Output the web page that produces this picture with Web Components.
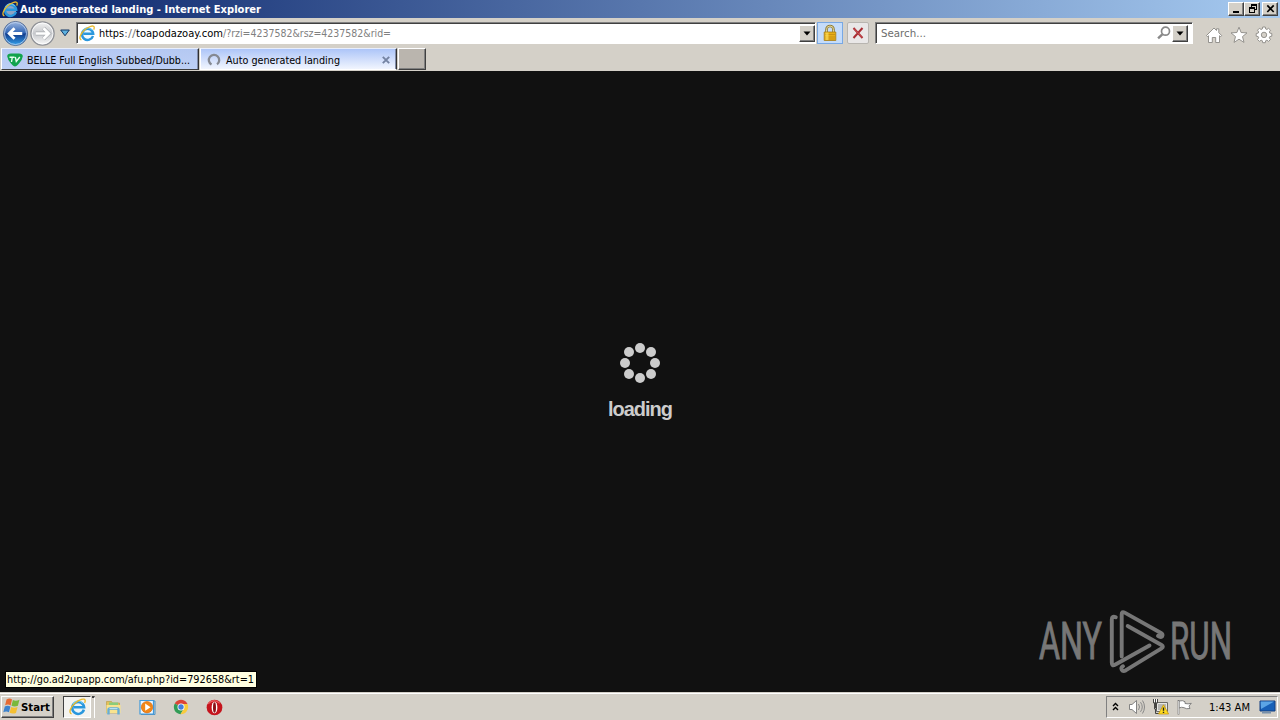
<!DOCTYPE html>
<html lang="en">
<head>
<meta charset="utf-8">
<title>Auto generated landing</title>
<style>
    html, body { margin: 0; height: 100%; overflow: hidden; }
    body {
        --face: #d4d0c8;
        --ink: #000;
        font: 11px/14px "DejaVu Sans Condensed", "DejaVu Sans", sans-serif;
        color: var(--ink);
        background: #111;
    }
</style>
</head>
<body>
<desktop-screen></desktop-screen>

<script>
// All glyphs in one place, drawn in their own small viewBoxes
const ICONS = {
    ie: `<svg viewBox="0 0 16 16"><circle cx="8.500" cy="8.300" r="6" fill="#e4f6ff" opacity=".6"/><path d="M14 11A5.600 5.600 0 1 1 14.200 8.700H4.500" fill="none" stroke="#2a97dd" stroke-width="2.400"/><path d="M13 5.200A5.400 5.400 0 0 0 3.700 6" fill="none" stroke="#79d0f5" stroke-width="1"/><path d="M2.400 14.900C-.6 14 1.200 9 5.500 5 9.500 1.200 14.800-.2 15.200 2.200c.1.900-.1 1.600-.5 2.400" fill="none" stroke="#e9b92c" stroke-width="1.300"/></svg>`,
    back: `<svg viewBox="0 0 28 28"><defs><linearGradient id="b" x2="0" y2="1"><stop stop-color="#9fb8e0"/><stop offset=".48" stop-color="#3165b4"/><stop offset=".52" stop-color="#123c8c"/><stop offset="1" stop-color="#35a4ee"/></linearGradient></defs><circle cx="14" cy="14" r="12.500" fill="url(#b)" stroke="#5c7197"/><circle cx="14" cy="14" r="11.400" fill="none" stroke="#c5d8f3" stroke-width=".8"/><path d="M21 14H8M13 8.500 7.500 14l5.500 5.500" fill="none" stroke="#fff" stroke-width="3"/></svg>`,
    forward: `<svg viewBox="0 0 28 28"><defs><linearGradient id="f" x2="0" y2="1"><stop stop-color="#f3f3f3"/><stop offset=".5" stop-color="#c6c8cc"/><stop offset="1" stop-color="#fafafa"/></linearGradient></defs><circle cx="14" cy="14" r="12" fill="url(#f)" stroke="#8f9197" stroke-width="1.400"/><circle cx="14" cy="14" r="10.800" fill="none" stroke="#fff" stroke-width=".8"/><path d="M7 14h13M15 8.500l5.500 5.500L15 19.500" fill="none" stroke="#a6a9ae" stroke-width="4"/><path d="M7 14h13M15 8.500l5.500 5.500L15 19.500" fill="none" stroke="#fff" stroke-width="2.800"/></svg>`,
    history: `<svg viewBox="0 0 10 8"><path d="M.7 1h8.600L5 6.800z" fill="#5db1df" stroke="#123765"/></svg>`,
    down: `<svg viewBox="0 0 8 5"><path d="M.5.500h7L4 4.500z"/></svg>`,
    lock: `<svg viewBox="0 0 16 16"><path d="M4.500 8V4.500a3.500 3.500 0 0 1 7 0V8" fill="none" stroke="#8e7b36" stroke-width="2.600"/><path d="M4.500 8V4.500a3.500 3.500 0 0 1 7 0V8" fill="none" stroke="#e2d79b" stroke-width="1"/><path d="M2.200 7h11.600v8.500H2.200z" fill="#e7ae16" stroke="#a67c15" stroke-width=".8"/><path d="M3 9.500h10M3 12h10M3 14h10" stroke="#bd8511" stroke-width=".7"/><path d="M3.500 7.500h3v7.500h-3z" fill="#ffe05a" opacity=".7"/></svg>`,
    stop: `<svg viewBox="0 0 12 12"><path d="m1.500 1 9 10M10.500 1l-9 10" stroke="#a92d33" stroke-width="2"/><path d="m2 1.500 8 9" stroke="#d85f61" stroke-width=".7"/></svg>`,
    search: `<svg viewBox="0 0 14 14"><circle cx="8.500" cy="5.200" r="4" fill="#fff" stroke="#898989" stroke-width="1.700"/><path d="m5.300 8.400-4.200 4" stroke="#898989" stroke-width="2.400"/></svg>`,
    home: `<svg viewBox="0 0 18 18"><path d="M1.500 9.500 9 2l2.500 2.500V2.800h2.300v4l2.900 2.700-1 1.200-1.200-1v6.800H10.700v-5H7.300v5H3.500V9.700l-1 1z" fill="#fff" stroke="#8b8985" stroke-width=".9"/></svg>`,
    star: `<svg viewBox="0 0 18 18"><path d="m9 1.200 2.100 5.300 5.900.4-4.500 3.700 1.500 5.800L9 13.200l-5 3.200 1.500-5.800L1 6.900l5.900-.4z" fill="#fff" stroke="#8b8985" stroke-width=".9"/></svg>`,
    gear: `<svg viewBox="0 0 18 18"><path d="m7.700 1h2.600l.4 2 1.200.5 1.700-1.200 1.900 1.900-1.200 1.700.5 1.200 2 .4v2.700l-2 .4-.5 1.200 1.200 1.700-1.900 1.900-1.700-1.200-1.200.5-.4 2H7.700l-.4-2-1.200-.5-1.700 1.200-1.900-1.900 1.200-1.700-.5-1.200-2-.4V7.500l2-.4.5-1.200-1.200-1.700 1.900-1.900 1.700 1.200L7.300 3z" fill="#fff" stroke="#8b8985" stroke-width=".9"/><circle cx="9" cy="8.900" r="2.700" fill="#d4d0c8" stroke="#8b8985" stroke-width=".9"/></svg>`,
    tv: `<svg viewBox="0 0 16 14"><path d="M.2 3.300Q.4.500 4 .5h8q3.600 0 3.800 2.800-.3 3.200-3.600 6.900-2.800 3.300-4.200 3.300t-4.200-3.300Q.5 6.500.2 3.300z" fill="#11a34d"/><path d="M2.500 4.200h5M5.300 4 4.500 9M8.300 4l1 4.500L12.800 4" fill="none" stroke="#e5fff0" stroke-width="1.400"/></svg>`,
    ring: `<svg viewBox="0 0 14 14"><path d="M4.500 11.600A5.200 5.200 0 1 1 10 11.300" fill="none" stroke="#858992" stroke-width="2.300"/></svg>`,
    close: `<svg viewBox="0 0 8 8"><path d="m.8.800 6.400 6.400M7.200.8.800 7.200" stroke="#7483a2" stroke-width="1.900"/></svg>`,
    min: `<svg viewBox="0 0 11 10"><path d="M2 7h6v2H2z"/></svg>`,
    restore: `<svg viewBox="0 0 11 10" shape-rendering="crispEdges"><path d="M4 0h6v6H8V5h1V2H5v1H4zM2 3h6v6H2zM3 5v3h4V5z" fill-rule="evenodd"/></svg>`,
    exit: `<svg viewBox="0 0 11 10"><path d="m2.300 1.300 6.400 6.700M8.700 1.300 2.300 8" stroke="#000" stroke-width="1.700"/></svg>`,
    windows: `<svg viewBox="0 0 16 16"><path d="M3.300 1.500q2.800-1.800 5.200-.2L7.200 7Q4.600 5.400 2 6.900z" fill="#e66a32"/><path d="M9.300 1.900q2.900 1.400 6.200-.3L14 7.300q-2.900 1.300-6 .1z" fill="#79b83c"/><path d="M1.700 8q2.700-1.500 5.300 0l-1.400 5.500Q3 11.900.3 13.500z" fill="#3c82cd"/><path d="M7.700 8.400q2.900 1.400 6 0L12.200 14q-3 1.400-6-.1z" fill="#f4bf32"/></svg>`,
    folder: `<svg viewBox="0 0 17 17"><path d="M1.500 2.500h5l1 1.500h7v10h-13z" fill="#e4c15b" stroke="#b9983e" stroke-width=".6"/><path d="M4 3.500h9v5H4z" fill="#8bcc7a"/><path d="M1.500 6h14v8h-14z" fill="#f8e38f"/><path d="M3.500 15.500V11q0-1.500 1.500-1.500h7q1.500 0 1.500 1.500v4.500" fill="none" stroke="#67add6" stroke-width="2.400"/><path d="M4.500 9.500h8" stroke="#b3e0f5"/></svg>`,
    player: `<svg viewBox="0 0 17 17"><path d="M1 1.500h13.500V15H1z" fill="#e9f5ff" stroke="#3e9bdd" stroke-width="1.200"/><path d="M14.500 2h1.500v13.500H2" fill="none" stroke="#4d95ca"/><circle cx="8" cy="8.200" r="5.700" fill="#f18718" stroke="#d7640c" stroke-width=".6"/><path d="M6.200 4.600v7.200L11.500 8.200z" fill="#fff"/></svg>`,
    chrome: `<svg viewBox="0 0 16 16"><path d="M8 8 1.800 4.400A7.200 7.200 0 0 1 14.200 4.400L14.500 5H8z" fill="#dc4437"/><path d="M8 8 1.800 4.400A7.200 7.200 0 0 0 7.500 15.200L11 9.500z" fill="#329c56"/><path d="M8 5h6.500A7.200 7.200 0 0 1 7.500 15.200L11 9.500z" fill="#f8cb3d"/><circle cx="8" cy="8" r="3.500" fill="#fff"/><circle cx="8" cy="8" r="2.700" fill="#447fdc"/></svg>`,
    opera: `<svg viewBox="0 0 16 16"><circle cx="8" cy="8" r="7.400" fill="#c5141d"/><path d="M2 4.500Q7-1 13 4" fill="none" stroke="#e8585a" stroke-width="1.200"/><ellipse cx="8" cy="8" rx="2.700" ry="5.500" fill="#fff"/><ellipse cx="8" cy="8" rx="1.400" ry="4.900" fill="#8c1117"/></svg>`,
    chevrons: `<svg viewBox="0 0 8 10"><path d="m1 4 2.500-2.500L6 4M1 8l2.500-2.500L6 8" fill="none" stroke="#000" stroke-width="1.400"/></svg>`,
    speaker: `<svg viewBox="0 0 18 16"><path d="M1.500 5.500H4L8.500 1.500v13L4 10.500H1.500z" fill="#fff" stroke="#777" stroke-width=".9"/><path d="M10.500 5q2 3 0 6M12.500 3.200q3.500 4.800 0 9.600M14.500 1.500q4 6.500 0 13" fill="none" stroke="#888" stroke-width="1"/></svg>`,
    network: `<svg viewBox="0 0 17 17"><path d="M4.500 4.500h11v9h-11z" fill="#e7e7e4" stroke="#6c6c69"/><path d="M6 6h8v6H6z" fill="#b8b8b5"/><path d="M1.500 1v4h4V1M3.500 1v9M2.500 5h2v6h-2z" fill="#fff" stroke="#454543"/><path d="M3.500 11v4.500h5" fill="none" stroke="#454543"/><path d="M11.500 6.800 16.600 16H6.500z" fill="#ffdc20" stroke="#c49100" stroke-width=".7"/><path d="M11.500 9.500v3.300M11.500 13.800v1.300" stroke="#222" stroke-width="1.400"/></svg>`,
    flag: `<svg viewBox="0 0 17 16"><path d="M3 2q4-1 6 .7v1.800q3 .8 6.300-.2L13 7l1 2.500q-4 .8-6-.8Q5.500 7.700 3 9z" fill="#fff" stroke="#777" stroke-width=".9"/><path d="M2.500 1v14.500" stroke="#777" stroke-width="1.700"/><path d="M2.500 2v13" stroke="#fff" stroke-width=".6"/></svg>`,
    monitor: `<svg viewBox="0 0 17 14"><path d="M1 1h15v10H1z" fill="#1760b7" stroke="#143e80"/><path d="M1.600 1.600H15L2 9z" fill="#5ba5e6"/><path d="M3 12.500h9" stroke="#7890aa" stroke-width="2"/></svg>`,
    play: `<svg viewBox="0 2 56 62"><g fill="none" stroke="#777" stroke-width="3.900" stroke-linecap="round" stroke-linejoin="round"><path d="M6.800 9.300Q2.800 7.500 2.800 11.500V54.500q0 4 3.200 2.200L40.500 37.500"/><path d="M12.700 48.500V6.300q0-3.300 3-1.700L52 25q2.500 1.500 1 3.500-1.500 1.200-4-.6"/><path d="m18.700 18 33.800 19q2.700 1.600 0 3.300L17 62.200q-3 1.700-4.300-.5-1-2 1.300-3.500"/></g></svg>`
};

class UiIcon extends HTMLElement {
    connectedCallback() {
        this.attachShadow({ mode: 'open' });
        const w = this.getAttribute('w') || 16;
        const h = this.getAttribute('h') || w;
        this.shadowRoot.innerHTML = `
            <style>
                :host { display: block; flex: none; width: ${w}px; height: ${h}px; }
                svg { display: block; width: 100%; height: 100%; overflow: visible; }
            </style>
            ${ICONS[this.getAttribute('name')]}
        `;
    }
}
customElements.define('ui-icon', UiIcon);

// One line of text set to a given width
class UiText extends HTMLElement {
    connectedCallback() {
        this.attachShadow({ mode: 'open' });
        this.shadowRoot.innerHTML = `
            <style>
                :host { display: block; flex: none; width: ${this.getAttribute('w')}px; white-space: nowrap; }
                span { display: inline-block; transform-origin: 0 50%; }
            </style>
            <span><slot></slot></span>
        `;
        const span = this.shadowRoot.querySelector('span');
        const width = span.getBoundingClientRect().width;
        span.style.transform = `translateY(1px) scaleX(${this.getAttribute('w') / width})`;
    }
}
customElements.define('ui-text', UiText);

class BevelButton extends HTMLElement {
    connectedCallback() {
        this.attachShadow({ mode: 'open' });
        this.shadowRoot.innerHTML = `
            <style>
                :host {
                    display: flex;
                    flex: none;
                    align-items: center;
                    justify-content: center;
                    box-sizing: border-box;
                    background: var(--face);
                    border: 1px solid;
                    border-color: #fff #404040 #404040 #fff;
                    box-shadow: inset -1px -1px #808080;
                }
            </style>
            <slot></slot>
        `;
    }
}
customElements.define('bevel-button', BevelButton);

class TitleBar extends HTMLElement {
    connectedCallback() {
        this.attachShadow({ mode: 'open' });
        this.shadowRoot.innerHTML = `
            <style>
                :host {
                    display: flex;
                    height: 18px;
                    box-sizing: border-box;
                    padding: 0 2px;
                    align-items: center;
                    background: linear-gradient(90deg, #0a246a, #a6caf0);
                    color: #fff;
                    font-weight: bold;
                }
                ui-text { margin-left: 2px; }
                .buttons { display: flex; margin-left: auto; }
                bevel-button { width: 16px; height: 14px; }
                bevel-button:last-child { margin-left: 2px; }
            </style>
            <ui-icon name="ie" w="16"></ui-icon>
            <ui-text w="241"><slot></slot></ui-text>
            <div class="buttons">
                <bevel-button><ui-icon name="min" w="11" h="10"></ui-icon></bevel-button>
                <bevel-button><ui-icon name="restore" w="11" h="10"></ui-icon></bevel-button>
                <bevel-button><ui-icon name="exit" w="11" h="10"></ui-icon></bevel-button>
            </div>
        `;
    }
}
customElements.define('title-bar', TitleBar);

class NavBar extends HTMLElement {
    connectedCallback() {
        this.attachShadow({ mode: 'open' });
        this.shadowRoot.innerHTML = `
            <style>
                :host { display: flex; height: 30px; box-sizing: border-box; padding: 0 7px 0 2px; align-items: center; background: var(--face); }
                .field {
                    display: flex;
                    align-items: center;
                    box-sizing: border-box;
                    height: 22px;
                    background: #fff;
                    border: 1px solid;
                    border-color: #808080 #fff #fff #808080;
                    box-shadow: inset 1px 1px #404040;
                }
                .address { width: 740px; margin-left: 6px; padding-left: 2px; }
                .address ui-icon { margin-right: 4px; }
                .address bevel-button ui-icon { margin-right: 0; }
                .search { width: 318px; margin-left: 6px; padding-left: 5px; color: #6d6d6d; }
                .dim { color: #808080; }
                .field bevel-button { width: 16px; height: 17px; margin-left: auto; }
                .search bevel-button { margin: 0 4px 0 1px; }
                .search .glass { margin-left: auto; }
                .history { margin-left: 4px; }
                .lock, .stop { display: flex; align-items: center; justify-content: center; box-sizing: border-box; height: 22px; }
                .lock { width: 26px; margin-left: 1px; background: #c5dcfa; border: 1px solid #78a8e4; }
                .stop { width: 22px; margin-left: 4px; background: #e9e7e7; border: 1px solid #b8b5b0; border-radius: 2px; }
                .tools { display: flex; gap: 7px; margin-left: auto; padding-top: 4px; }
            </style>
            <ui-icon name="back" w="27"></ui-icon>
            <ui-icon name="forward" w="27"></ui-icon>
            <ui-icon class="history" name="history" w="10" h="8"></ui-icon>
            <div class="field address">
                <ui-icon name="ie" w="16"></ui-icon>
                <ui-text w="25">https</ui-text>
                <ui-text w="12" class="dim">://</ui-text>
                <ui-text w="87">toapodazoay.com</ui-text>
                <ui-text w="168" class="dim">/?rzi=4237582&amp;rsz=4237582&amp;rid=</ui-text>
                <bevel-button><ui-icon name="down" w="8" h="5"></ui-icon></bevel-button>
            </div>
            <div class="lock"><ui-icon name="lock" w="16"></ui-icon></div>
            <div class="stop"><ui-icon name="stop" w="12"></ui-icon></div>
            <div class="field search">
                <ui-text w="45">Search...</ui-text>
                <ui-icon class="glass" name="search" w="14"></ui-icon>
                <bevel-button><ui-icon name="down" w="8" h="5"></ui-icon></bevel-button>
            </div>
            <div class="tools">
                <ui-icon name="home" w="18"></ui-icon>
                <ui-icon name="star" w="18"></ui-icon>
                <ui-icon name="gear" w="18"></ui-icon>
            </div>
        `;
    }
}
customElements.define('nav-bar', NavBar);

class BrowserTab extends HTMLElement {
    connectedCallback() {
        this.attachShadow({ mode: 'open' });
        this.shadowRoot.innerHTML = `
            <style>
                :host {
                    display: flex;
                    flex: none;
                    box-sizing: border-box;
                    width: 198px;
                    height: 22px;
                    padding: 1px 5px 0;
                    align-items: center;
                    background: linear-gradient(#b4c8f2, #bdcff5);
                    border: 1px solid;
                    border-color: #e8eefc #303030 #404040 #fff;
                    box-shadow: inset -1px 0 #808ba8;
                }
                :host([active]) { width: 197px; padding-left: 6px; background: linear-gradient(#adc5f8, #f1f5fe); border-bottom-color: #fff; }
                .close { margin-left: auto; margin-right: 1px; }
                ::slotted(ui-text) { margin-left: 4px; }
                :host([active]) ::slotted(ui-text) { margin-left: 5px; }
            </style>
            <ui-icon name="${this.getAttribute('icon')}" w="${this.hasAttribute('active') ? 14 : 16}" h="14"></ui-icon>
            <slot></slot>
            ${this.hasAttribute('active') ? '<ui-icon class="close" name="close" w="8"></ui-icon>' : ''}
        `;
    }
}
customElements.define('browser-tab', BrowserTab);

class TabStrip extends HTMLElement {
    connectedCallback() {
        this.attachShadow({ mode: 'open' });
        this.shadowRoot.innerHTML = `
            <style>
                :host { display: flex; height: 23px; box-sizing: border-box; padding-left: 1px; gap: 1px; background: var(--face); }
                bevel-button { width: 28px; height: 22px; background: #bab5ae; }
            </style>
            <slot></slot>
            <bevel-button></bevel-button>
        `;
    }
}
customElements.define('tab-strip', TabStrip);

class LoadingPage extends HTMLElement {
    connectedCallback() {
        this.attachShadow({ mode: 'open' });
        const dots = [[20, 5], [31, 9], [35, 20], [31, 31], [20, 35], [9, 31], [5, 20], [9, 9]]
            .map(([x, y]) => `<circle cx="${x}" cy="${y}" r="5"/>`).join('');
        this.shadowRoot.innerHTML = `
            <style>
                :host {
                    display: flex;
                    position: relative;
                    flex: 1;
                    flex-direction: column;
                    align-items: center;
                    box-sizing: border-box;
                    padding-top: 272px;
                    background: #111;
                }
                .dots { width: 40px; height: 40px; fill: #ccc; }
                .label { margin-top: 13px; font: bold 20px/24px "Liberation Sans", sans-serif; letter-spacing: -1px; color: #ccc; }
                .status {
                    position: absolute;
                    left: 5px;
                    bottom: 4px;
                    box-sizing: border-box;
                    height: 17px;
                    padding: 0 2px 0 1px;
                    line-height: 14px;
                    background: #ffffe1;
                    border: 1px solid #000;
                }
                /* watermark sits over the page */
                .mark { position: absolute; left: 1039px; top: 539px; display: flex; align-items: center; color: #777; font: 52px/62px Roboto, sans-serif; -webkit-text-stroke: 1px #777; }
                .mark ui-icon { margin: 0 5px 0 7px; }
            </style>
            <svg class="dots" viewBox="0 0 40 40">${dots}</svg>
            <ui-text class="label" w="64">loading</ui-text>
            <div class="status"><ui-text w="247">http://go.ad2upapp.com/afu.php?id=792658&amp;rt=1</ui-text></div>
            <div class="mark">
                <ui-text w="63">ANY</ui-text>
                <ui-icon name="play" w="56" h="62"></ui-icon>
                <ui-text w="62">RUN</ui-text>
            </div>
        `;
    }
}
customElements.define('loading-page', LoadingPage);

class TaskBar extends HTMLElement {
    connectedCallback() {
        this.attachShadow({ mode: 'open' });
        this.shadowRoot.innerHTML = `
            <style>
                :host {
                    display: flex;
                    height: 28px;
                    box-sizing: border-box;
                    padding: 1px 2px 0 1px;
                    align-items: center;
                    background: var(--face);
                    box-shadow: inset 0 1px var(--face), inset 0 2px #fff;
                }
                .start { width: 53px; height: 22px; font-weight: bold; gap: 1px; }
                .start ui-icon { margin-left: -2px; }
                .active {
                    display: flex;
                    align-items: center;
                    justify-content: center;
                    box-sizing: border-box;
                    width: 28px;
                    height: 22px;
                    margin-left: 9px;
                    background: #f4f3f0;
                    border: 1px solid;
                    border-color: #404040 #fff #fff #404040;
                }
                .edge { width: 3px; height: 22px; margin-left: 1px; border-top: 2px solid #404040; border-right: 1px solid #fff; box-sizing: border-box; }
                .pinned { display: flex; gap: 17px; margin: 1px 0 0 10px; }
                .tray {
                    display: flex;
                    align-items: center;
                    box-sizing: border-box;
                    width: 172px;
                    height: 22px;
                    margin-left: auto;
                    padding: 0 1px 0 5px;
                    border: 1px solid;
                    border-color: #808080 #fff #fff #808080;
                }
                .tray ui-text { margin: 0 9px 0 16px; }
            </style>
            <bevel-button class="start"><ui-icon name="windows" w="17"></ui-icon><ui-text w="29">Start</ui-text></bevel-button>
            <div class="active"><ui-icon name="ie" w="17"></ui-icon></div>
            <div class="edge"></div>
            <div class="pinned">
                <ui-icon name="folder" w="17"></ui-icon>
                <ui-icon name="player" w="17"></ui-icon>
                <ui-icon name="chrome" w="16"></ui-icon>
                <ui-icon name="opera" w="17"></ui-icon>
            </div>
            <div class="tray">
                <ui-icon name="chevrons" w="8" h="10" style="margin-right: 8px"></ui-icon>
                <ui-icon name="speaker" w="18" h="16" style="margin-right: 6px"></ui-icon>
                <ui-icon name="network" w="17" style="margin-right: 7px"></ui-icon>
                <ui-icon name="flag" w="17" h="16"></ui-icon>
                <ui-text w="41">1:43 AM</ui-text>
                <ui-icon name="monitor" w="17" h="14"></ui-icon>
            </div>
        `;
    }
}
customElements.define('task-bar', TaskBar);

class DesktopScreen extends HTMLElement {
    connectedCallback() {
        this.attachShadow({ mode: 'open' });
        this.shadowRoot.innerHTML = `
            <style>
                :host { display: flex; flex-direction: column; width: 1280px; height: 720px; overflow: hidden; }
            </style>
            <title-bar>Auto generated landing - Internet Explorer</title-bar>
            <nav-bar></nav-bar>
            <tab-strip>
                <browser-tab icon="tv"><ui-text w="163">BELLE Full English Subbed/Dubb...</ui-text></browser-tab>
                <browser-tab icon="ring" active><ui-text w="114">Auto generated landing</ui-text></browser-tab>
            </tab-strip>
            <loading-page></loading-page>
            <task-bar></task-bar>
        `;
    }
}
customElements.define('desktop-screen', DesktopScreen);
</script>
</body>
</html>
